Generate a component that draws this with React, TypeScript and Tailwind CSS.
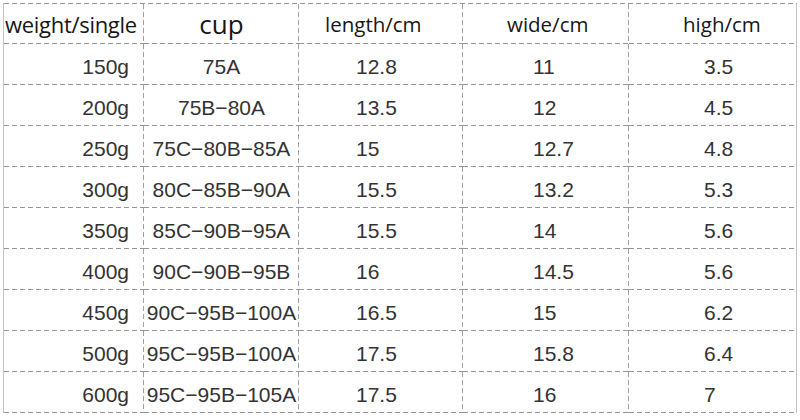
const rows = [
  ["150g", "75A", "12.8", "11", "3.5"],
  ["200g", "75B−80A", "13.5", "12", "4.5"],
  ["250g", "75C−80B−85A", "15", "12.7", "4.8"],
  ["300g", "80C−85B−90A", "15.5", "13.2", "5.3"],
  ["350g", "85C−90B−95A", "15.5", "14", "5.6"],
  ["400g", "90C−90B−95B", "16", "14.5", "5.6"],
  ["450g", "90C−95B−100A", "16.5", "15", "6.2"],
  ["500g", "95C−95B−100A", "17.5", "15.8", "6.4"],
  ["600g", "95C−95B−105A", "17.5", "16", "7"],
];

// dashed bottom + right line drawn with gradients so the dashes are 5px long
const cell =
  "flex items-center bg-no-repeat bg-[repeating-linear-gradient(90deg,#959595_0_5px,transparent_5px_8px),repeating-linear-gradient(180deg,#a0a0a0_0_5px,transparent_5px_8px)] bg-position-[left_bottom,right_top] bg-size-[100%_1px,1px_100%]";
const lastCell =
  "flex items-center bg-no-repeat bg-[repeating-linear-gradient(90deg,#959595_0_5px,transparent_5px_8px)] bg-position-[left_bottom] bg-size-[100%_1px]";

export default function App() {
  return (
    <div className="w-[800px] h-[420px] bg-white pt-[3px] pl-[3px] overflow-hidden">
      <div className="w-[794px] border-l border-r border-[#c4c4c4] bg-no-repeat bg-[repeating-linear-gradient(90deg,#959595_0_5px,transparent_5px_8px)] bg-position-[left_top] bg-size-[100%_1px] pt-px">
        <div
          className="grid grid-cols-[140px_155px_164px_166px_167px] h-[40px] text-[#161616]"
          style={{ fontFamily: '"Open Sans", "Noto Sans", sans-serif' }}
        >
          <div className={`${cell} text-[22px] pl-[1px] tracking-[-0.3px]`}>weight/single</div>
          <div className={`${cell} justify-center text-[26px] pt-[1px]`}>cup</div>
          <div className={`${cell} text-[20.5px] pl-[26px]`}>length/cm</div>
          <div className={`${cell} text-[20.5px] pl-[44px]`}>wide/cm</div>
          <div className={`${lastCell} text-[20.5px] pl-[54px]`}>high/cm</div>
        </div>
        {rows.map((r) => (
          <div
            key={r[0]}
            className="grid grid-cols-[140px_155px_164px_166px_167px] h-[41px] text-[21px] text-[#333]"
            style={{ fontFamily: '"Liberation Sans", Arial, sans-serif' }}
          >
            <div className={`${cell} justify-end pr-[15px] pt-[4px]`}>{r[0]}</div>
            <div className={`${cell} justify-center pt-[4px]`}>{r[1]}</div>
            <div className={`${cell} pl-[57px] pt-[4px]`}>{r[2]}</div>
            <div className={`${cell} pl-[70px] pt-[4px]`}>{r[3]}</div>
            <div className={`${lastCell} pl-[75px] pt-[4px]`}>{r[4]}</div>
          </div>
        ))}
      </div>
    </div>
  );
}
